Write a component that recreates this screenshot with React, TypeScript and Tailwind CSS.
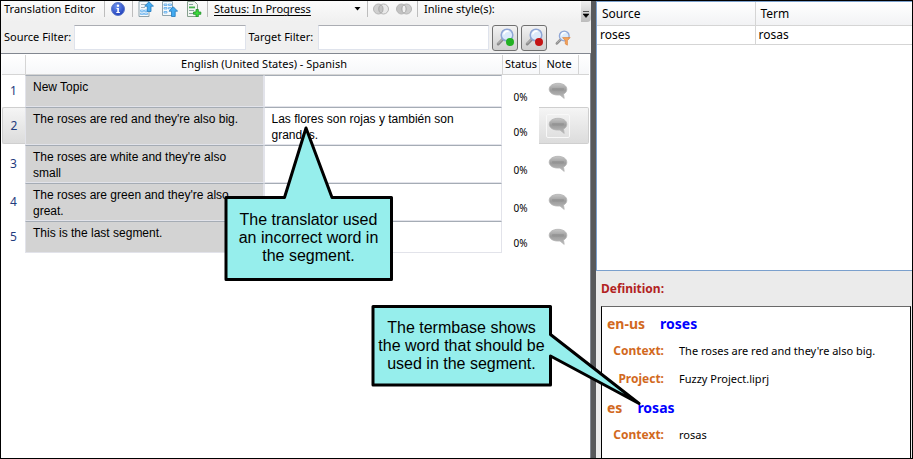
import type { ReactNode } from 'react';

const ui = "font-['Noto_Sans',sans-serif]";
const arial = "font-['Liberation_Sans',Arial,sans-serif]";

const segments = [
  { source: 'New Topic', target: '', tall: false },
  { source: "The roses are red and they're also big.", target: 'Las flores son rojas y también son grandes.', tall: true, selected: true },
  { source: "The roses are white and they're also small", target: '', tall: true },
  { source: "The roses are green and they're also great.", target: '', tall: true },
  { source: 'This is the last segment.', target: '', tall: false },
];

function Separator() {
  return <span className="h-4 w-px shrink-0 bg-[#bdbdbd]" />;
}

function InfoIcon() {
  return (
    <svg width="14" height="14" viewBox="0 0 14 14">
      <defs>
        <radialGradient id="info" cx="0.4" cy="0.3" r="0.8">
          <stop offset="0" stopColor="#6f95f0" />
          <stop offset="1" stopColor="#1533b4" />
        </radialGradient>
      </defs>
      <circle cx="7" cy="7" r="6.5" fill="url(#info)" stroke="#5c79c8" />
      <circle cx="7" cy="3.7" r="1.2" fill="#fff" />
      <path d="M5.500 6h2.400v4h1v1H5.300v-1h1V7h-.8z" fill="#fff" />
    </svg>
  );
}

function ExportTopIcon() {
  return (
    <svg width="16" height="16" viewBox="0 0 16 16">
      <path d="M1 .5h10v15H1z" fill="#f4f8fb" stroke="#8fa3ad" />
      <path d="M3 3.500h6M3 6.500h4" stroke="#9eb0ba" />
      <path d="M2.500 9h3v1.500h-3zM6.500 9h3v1.500h-3zM2.500 12h3v1.500h-3zM6.500 12h3v1.500h-3z" fill="#d5ecff" stroke="#6cb4ee" strokeWidth=".8" />
      <path d="M11 .7 15.500 5.200h-2.500V10.500H9.300V5.200H6.700z" fill="#43aaf0" stroke="#2179bd" strokeWidth=".8" />
    </svg>
  );
}

function ExportBottomIcon() {
  return (
    <svg width="16" height="16" viewBox="0 0 16 16">
      <path d="M.5.5h10v14H.5z" fill="#f4f8fb" stroke="#8fa3ad" />
      <path d="M2 3h3v1.500H2zM6.500 3h3v1.500h-3zM2 6.500h3V8H2zM6.500 6.500h3V8h-3zM2 10.500h3V12H2z" fill="#d5ecff" stroke="#5aa9ea" strokeWidth=".8" />
      <path d="M11.300 5.800 15.600 10.200h-2.400v5.300H9.500v-5.300H7z" fill="#43aaf0" stroke="#2179bd" strokeWidth=".8" />
    </svg>
  );
}

function AddPageIcon() {
  return (
    <svg width="16" height="16" viewBox="0 0 16 16">
      <path d="M1.500.5h7l3 3v12h-10z" fill="#f2f7f2" stroke="#87a08e" />
      <path d="M3 3.500h4M3 9.500h5M3 12.500h4" stroke="#8aa0a0" />
      <path d="M3 5.500h6v1.800H3z" fill="#45b24d" />
      <path d="M10 8.500h2.300V11h2.500v2.300h-2.500v2.500H10v-2.500H7.500V11H10z" fill="#3edb3e" stroke="#1c8c25" strokeWidth=".8" />
    </svg>
  );
}

function CirclesIcon({ filled }: { filled?: boolean }) {
  return (
    <svg width="16" height="12" viewBox="0 0 16 12">
      <circle cx="5.500" cy="6" r="5" fill={filled ? '#c2c2c2' : '#cfcfcf'} stroke="#b5b5b5" />
      <circle cx="10.500" cy="6" r="5" fill={filled ? '#c2c2c2' : '#e6e6e6'} fillOpacity=".8" stroke="#b5b5b5" />
      <ellipse cx="8" cy="6" rx="2" ry="3.800" fill={filled ? '#f0f0f0' : '#c4c4c4'} stroke="#ababab" strokeWidth=".8" />
    </svg>
  );
}

function MagnifierIcon({ size, children }: { size: number; children?: ReactNode }) {
  return (
    <svg width={size} height={size} viewBox="0 0 19 19">
      <path d="M7.500 10.500 2.200 16" stroke="#8a8a8a" strokeWidth="3" strokeLinecap="round" />
      <path d="M7 10.500 2.200 15.300" stroke="#c4c4c4" strokeWidth="1" strokeLinecap="round" />
      <circle cx="11" cy="7" r="5.800" fill="#dcebfb" stroke="#8fa6d6" strokeWidth="1.500" />
      <path d="M7.800 6.500a3.400 3.400 0 0 1 4.800-3" stroke="#fff" strokeWidth="1.600" fill="none" />
      {children}
    </svg>
  );
}

function NoteIcon() {
  return (
    <svg width="20" height="18" viewBox="0 0 20 18">
      <defs>
        <linearGradient id="note" x1="0" y1="0" x2="0" y2="1">
          <stop offset="0" stopColor="#c6c6c6" />
          <stop offset=".45" stopColor="#9c9c9c" />
          <stop offset="1" stopColor="#bcbcbc" />
        </linearGradient>
      </defs>
      <path d="M10 1.300c5 0 8.800 2.500 8.800 5.900 0 2.200-1.300 3.900-3.300 4.900l.7 4.300-4.200-3.400c-6.500.6-10.800-2.100-10.800-5.800 0-3.400 3.800-5.900 8.800-5.900z" fill="url(#note)" stroke="#b4b4b4" strokeWidth=".8" />
      <rect x="4" y="6" width="12" height="2.500" rx="1" fill="#8a8a8a" opacity=".5" />
    </svg>
  );
}

function Toolbar() {
  return (
    <div className="flex h-[21px] items-start justify-between bg-linear-to-b from-[#fbfbfb] to-[#f0f0f0]">
      <div className="flex h-4 items-center pl-[3px] text-[11px]">
        <span className="w-[100px] whitespace-nowrap">Translation Editor</span>
        <Separator />
        <button aria-label="Information" className="ml-1.5 mr-[7px]"><InfoIcon /></button>
        <Separator />
        <div className="mx-[5px] flex gap-2">
          <button aria-label="Move to top"><ExportTopIcon /></button>
          <button aria-label="Move up"><ExportBottomIcon /></button>
          <button aria-label="Add segment"><AddPageIcon /></button>
        </div>
        <Separator />
        <div className="ml-1.5 flex w-[153px] items-center">
          <select aria-label="Status" className="h-4 min-w-0 flex-1 appearance-none bg-transparent text-[11px] underline underline-offset-2">
            <option>Status: In Progress</option>
          </select>
          <svg width="7" height="4" viewBox="0 0 7 4" className="mr-1.5 shrink-0"><path d="M.5 0h6l-3 3.500z" fill="#000" /></svg>
        </div>
        <Separator />
        <div className="mx-[5px] flex gap-[7px]">
          <button aria-label="Join"><CirclesIcon /></button>
          <button aria-label="Merge"><CirclesIcon filled /></button>
        </div>
        <Separator />
        <span className="ml-1.5 whitespace-nowrap">Inline style(s):</span>
      </div>
      <button aria-label="More toolbar items" className="flex h-[21px] w-[10px] items-end justify-center rounded-br-sm bg-linear-to-b from-[#f0f0f0] to-[#bcbcbc] pb-1">
        <svg width="6" height="7" viewBox="0 0 6 7"><path d="M0 .5h6M0 3h6L3 6.500z" fill="#000" stroke="#000" strokeWidth=".6" /></svg>
      </button>
    </div>
  );
}

function FilterBar() {
  const field = 'h-[25px] min-w-0 flex-1 border border-[#dfe3ec] border-t-[#abadb3] bg-white px-1 outline-none';
  const button = 'flex size-[26px] items-center justify-center rounded-[3px] border border-[#707070] bg-linear-to-b from-[#f2f2f2] to-[#cfcfcf]';
  return (
    <div className="flex h-[31px] items-center bg-[#f0f0f0] pl-[3px] pr-[19px] text-[11px]">
      <label htmlFor="sourceFilter" className="w-[70px] whitespace-nowrap">Source Filter:</label>
      <input id="sourceFilter" className={field} />
      <label htmlFor="targetFilter" className="ml-[3px] w-[69px] whitespace-nowrap">Target Filter:</label>
      <input id="targetFilter" className={field} />
      <div className="ml-[3px] flex items-center gap-[3px]">
        <button aria-label="Apply filter" className={button}>
          <MagnifierIcon size={19}><circle cx="14" cy="14" r="4" fill="#22b022" /></MagnifierIcon>
        </button>
        <button aria-label="Clear filter" className={button}>
          <MagnifierIcon size={19}><circle cx="14" cy="14" r="4" fill="#c41414" /></MagnifierIcon>
        </button>
        <button aria-label="Filter options" className="ml-1 flex size-[18px] items-center justify-center">
          <MagnifierIcon size={16}><path d="M9 9h9l-3.300 3.500v5.500l-2.500-1.500v-4z" fill="#f5a45c" stroke="#d9803a" strokeWidth=".8" /></MagnifierIcon>
        </button>
      </div>
    </div>
  );
}

function SegmentTable() {
  const head = 'border-b border-[#d5d5d5] p-0 text-[11px] font-normal';
  return (
    <table className="w-full table-fixed border-separate border-spacing-0 text-[12px]">
      <colgroup>
        <col className="w-[23px]" />
        <col />
        <col />
        <col className="w-[37px]" />
        <col className="w-[40px]" />
        <col className="w-[10px]" />
      </colgroup>
      <thead>
        <tr className="h-5 bg-linear-to-b from-white to-[#f6f7f9]">
          <th className={head} />
          <th colSpan={2} className={`${head} border-l`}>English (United States) - Spanish</th>
          <th className={`${head} border-l`}>Status</th>
          <th className={`${head} border-x`}>Note</th>
          <th className={head} />
        </tr>
      </thead>
      <tbody>
        {segments.map((segment, index) => (
          <tr key={segment.source} className={segment.tall ? 'h-[38px]' : 'h-8'}>
            <td className="p-0 align-top">
              <div className={`flex items-center justify-center text-[#1f3c7e] ${segment.tall ? 'h-[37px]' : 'h-8'} ${segment.selected ? 'rounded-l-[2px] border border-r-0 border-[#cfcfcf] bg-linear-to-b from-[#f5f5f5] to-[#dcdcdc]' : ''}`}>
                {index + 1}
              </div>
            </td>
            <td className={`border border-[#e2e3ea] border-t-[#a5acb5] bg-[#d3d3d3] px-[7px] pb-0 pt-[3px] align-top leading-4 ${arial}`}>
              {segment.source}
            </td>
            <td className="p-0 align-top">
              <textarea
                aria-label={`Translation of segment ${index + 1}`}
                defaultValue={segment.target}
                className={`block w-full resize-none overflow-hidden border border-[#e2e3ea] border-t-[#a5acb5] bg-white px-[7px] pb-0 pt-[3px] leading-4 outline-none ${arial} ${segment.tall ? 'h-[38px]' : 'h-8'}`}
              />
            </td>
            <td className="px-0 pb-0 pt-3 text-center text-[10px] leading-3">0%</td>
            <td colSpan={2} className="p-0 align-top">
              <div className={`flex items-center pl-[7px] ${segment.tall ? 'h-[37px]' : 'h-[31px]'} ${segment.selected ? 'rounded-r-[2px] border border-l-0 border-[#cfcfcf] bg-linear-to-b from-[#f5f5f5] to-[#dcdcdc]' : ''}`}>
                <button aria-label={`Note for segment ${index + 1}`} className={`flex size-6 items-center justify-center rounded-[2px] border ${segment.selected ? 'border-[#f8f8f8]' : 'border-transparent'}`}>
                  <NoteIcon />
                </button>
              </div>
            </td>
          </tr>
        ))}
      </tbody>
    </table>
  );
}

function TermTable() {
  const head = 'border-b border-[#d5d5d5] px-[5px] py-0 text-left font-normal';
  const cell = 'border-b border-[#d5d5d5] px-[3px] py-0';
  return (
    <div className="h-[270px] shrink-0 border border-r-0 border-[#7ba0cd] bg-white">
      <table className="w-full table-fixed border-separate border-spacing-0 text-[12px]">
        <thead>
          <tr className="h-6 bg-linear-to-b from-white to-[#f1f2f4]">
            <th className={head}>Source</th>
            <th className={`${head} border-l`}>Term</th>
          </tr>
        </thead>
        <tbody>
          <tr className="h-[19px]">
            <td className={cell}>roses</td>
            <td className={`${cell} border-l`}>rosas</td>
          </tr>
        </tbody>
      </table>
    </div>
  );
}

function Term({ language, word }: { language: string; word: string }) {
  return (
    <h3 className="flex h-7 items-center gap-[15px] pl-[5px] text-[14px] font-bold text-[#d2691e]">
      {language} <span className="text-[#0000ff]">{word}</span>
    </h3>
  );
}

function Detail({ label, value }: { label: string; value: string }) {
  return (
    <dl className="flex h-7 items-center gap-[15px]">
      <dt className="w-[62px] text-right text-[12px] font-bold text-[#d2691e]">{label}</dt>
      <dd className="whitespace-nowrap text-[11px]">{value}</dd>
    </dl>
  );
}

function DefinitionPanel() {
  return (
    <section className="flex flex-1 flex-col bg-[#ebebeb] pl-[5px] pr-px">
      <h2 className="flex h-[35px] items-center text-[12px] font-bold text-[#b22222]">Definition:</h2>
      <div className="flex-1 border border-b-0 border-black border-t-[#696969] bg-white pt-0.5">
        <Term language="en-us" word="roses" />
        <Detail label="Context:" value="The roses are red and they're also big." />
        <Detail label="Project:" value="Fuzzy Project.liprj" />
        <Term language="es" word="rosas" />
        <Detail label="Context:" value="rosas" />
      </div>
    </section>
  );
}

function SegmentCallout() {
  return (
    <aside className={`absolute left-[222px] top-[122px] h-[160px] w-[171px] text-center text-[16px] leading-[18px] ${arial}`}>
      <svg width="171" height="160" viewBox="0 0 171 160" className="absolute inset-0">
        <path d="M3 74.500H61.500L83 5 109 74.500H168.500V156.500H3z" fill="#96eeec" stroke="#000" strokeWidth="3" strokeLinejoin="round" />
      </svg>
      <p className="relative px-2.5 pt-[88px]">
        The translator used<br />an incorrect word in<br />the segment.
      </p>
    </aside>
  );
}

function TermbaseCallout() {
  return (
    <aside className={`absolute left-[369px] top-[303px] h-[104px] w-[274px] text-center text-[16px] leading-[18px] ${arial}`}>
      <svg width="274" height="104" viewBox="0 0 274 104" className="absolute inset-0">
        <path d="M3 2.500H180.500V30.500L269 99.500 180.500 52V81H3z" fill="#96eeec" stroke="#000" strokeWidth="3" strokeLinejoin="round" />
      </svg>
      <p className="relative w-[183px] pt-[15px]">
        The termbase shows<br />the word that should be<br />used in the segment.
      </p>
    </aside>
  );
}

export default function App() {
  return (
    <main className={`relative flex min-h-screen border border-black bg-white text-black ${ui}`}>
      <section className="flex min-w-0 flex-1 flex-col">
        <Toolbar />
        <FilterBar />
        <div className="flex-1 border-r border-t border-[#828790] pl-px pr-px pt-px">
          <SegmentTable />
        </div>
      </section>
      <div className="w-[5px] shrink-0 bg-[#58595b]" />
      <section className="flex w-[316px] shrink-0 flex-col">
        <TermTable />
        <DefinitionPanel />
      </section>
      <SegmentCallout />
      <TermbaseCallout />
    </main>
  );
}
